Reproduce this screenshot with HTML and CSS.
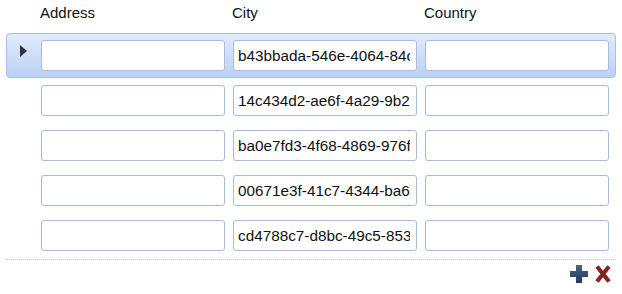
FILE: index.html
```html
<!DOCTYPE html>
<html>
<head>
<title>Addresses</title>
<link rel="stylesheet" href="styles.css">
</head>
<body>

<div class="grid">

  <!-- HEADER -->
  <div class="head">
    <div class="col">Address</div>
    <div class="col">City</div>
    <div class="col">Country</div>
  </div>

  <!-- ROWS -->
  <div class="row selected">
    <div class="marker"><span class="arrow"></span></div>
    <input class="cell" value="">
    <input class="cell" value="b43bbada-546e-4064-84c1-3f0e2a9d7c55">
    <input class="cell" value="">
  </div>

  <div class="row">
    <div class="marker"></div>
    <input class="cell" value="">
    <input class="cell" value="14c434d2-ae6f-4a29-9b21-7d0c5e8f3a12">
    <input class="cell" value="">
  </div>

  <div class="row">
    <div class="marker"></div>
    <input class="cell" value="">
    <input class="cell" value="ba0e7fd3-4f68-4869-976f-2c81d4b0e9a3">
    <input class="cell" value="">
  </div>

  <div class="row">
    <div class="marker"></div>
    <input class="cell" value="">
    <input class="cell" value="00671e3f-41c7-4344-ba6b-91e2f07c4d58">
    <input class="cell" value="">
  </div>

  <div class="row">
    <div class="marker"></div>
    <input class="cell" value="">
    <input class="cell" value="cd4788c7-d8bc-49c5-8531-6a0f2e7b9c14">
    <input class="cell" value="">
  </div>

  <!-- FOOTER -->
  <div class="foot">
    <button class="tool" title="Add">
      <svg width="18" height="18" viewBox="0 0 18 18">
        <defs>
          <linearGradient id="plusFill" x1="0" y1="0" x2="0" y2="1">
            <stop offset="0" stop-color="#4a6288"/>
            <stop offset="1" stop-color="#24385a"/>
          </linearGradient>
        </defs>
        <path d="M6 0h6v6h6v6h-6v6h-6v-6h-6v-6h6z" fill="url(#plusFill)"/>
      </svg>
    </button>
    <button class="tool" title="Delete">
      <svg width="16" height="18" viewBox="0 0 16 18">
        <path d="M2 1.5L14 16.5M14 1.5L2 16.5" stroke="#862323" stroke-width="4.2" stroke-linecap="butt"/>
      </svg>
    </button>
  </div>

</div>

</body>
</html>
```

FILE: styles.css
```css
body {margin:0; font-family:"Liberation Sans", Arial, sans-serif; background:white; color:#111;}

.grid {margin:0 6px; width:610px;}

.head {display:flex; height:33px; padding-left:34px; box-sizing:border-box; padding-top:4px;}
.col {width:192px; font-size:15px; line-height:17px; color:#111;}

.row {
  display:flex; align-items:center; gap:8px;
  height:45px; box-sizing:border-box;
  padding:0 6px 0 0;
  border:1px solid transparent; border-radius:4px;
}
.row.selected {
  background:linear-gradient(#e2ebfa,#bad1f2);
  border-color:#a6bfe6;
}

.marker {width:26px; height:100%; position:relative;}
.arrow {
  position:absolute; left:13px; top:11px;
  border-left:7px solid #2b3649;
  border-top:6px solid transparent;
  border-bottom:6px solid transparent;
}

.cell {
  width:184px; height:31px; box-sizing:border-box;
  border:1px solid #a8bddc; border-radius:3px;
  padding:0 6px 0 4px;
  font-family:"Liberation Sans", Arial, sans-serif;
  font-size:15.3px; color:#111; background:white;
  outline:none;
}

.foot {
  border-top:1px dotted #c2ccd9;
  margin-top:1px;
  display:flex; justify-content:flex-end; gap:7px;
  padding:5px 5px 0 0;
}
.tool {border:none; background:none; padding:0; margin:0; cursor:pointer; line-height:0;}
```
